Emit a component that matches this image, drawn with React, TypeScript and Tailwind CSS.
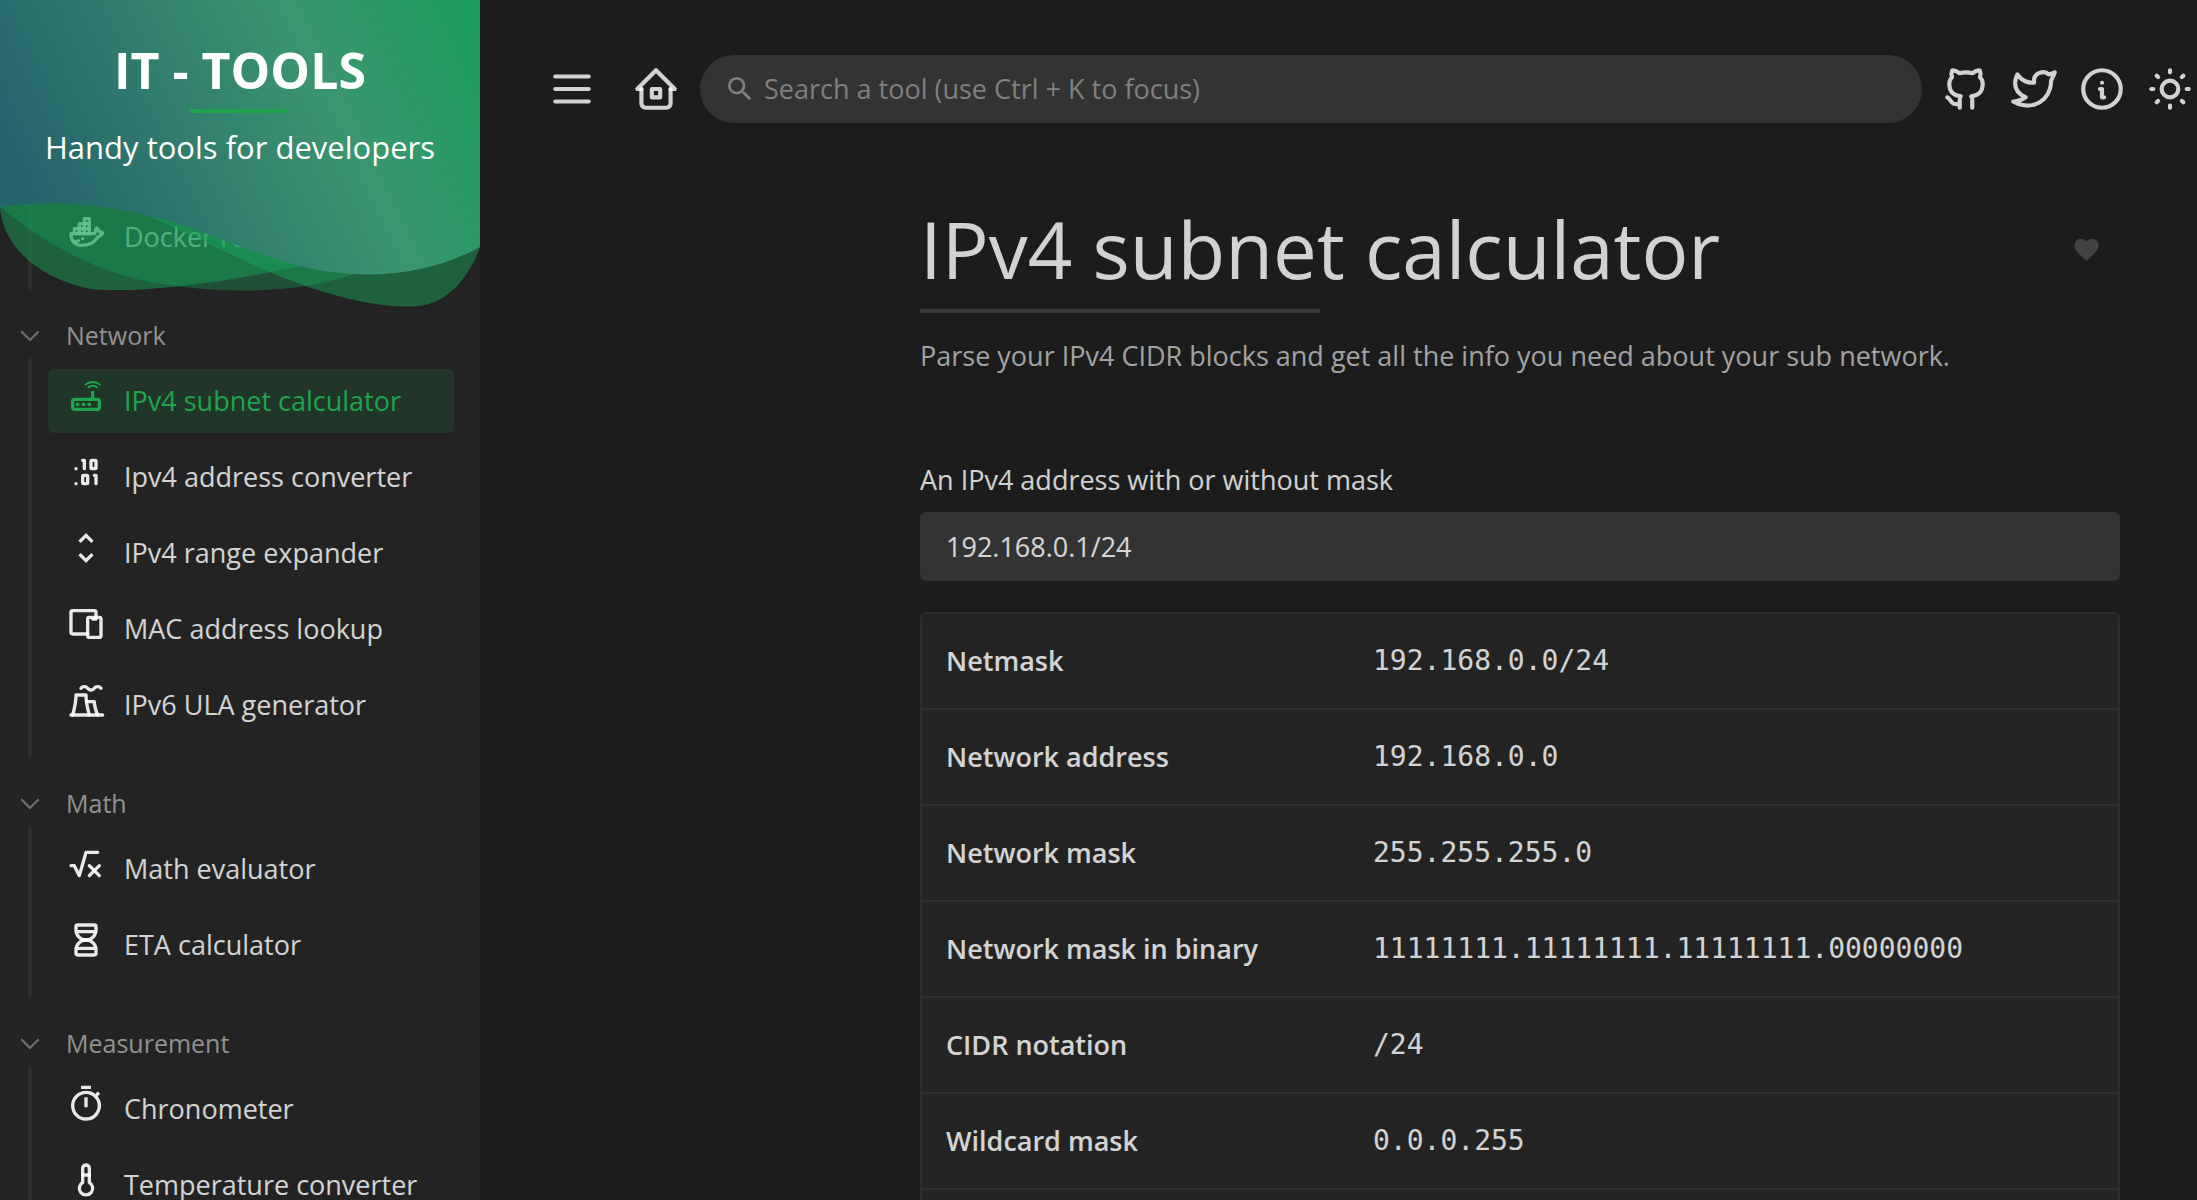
import { useState, type ReactNode } from "react";
import type { IconType } from "react-icons";
import {
  TbBinary,
  TbBrandDocker,
  TbBrandGithub,
  TbBrandTwitter,
  TbBuildingFactory,
  TbDevices,
  TbHome2,
  TbHourglass,
  TbInfoCircle,
  TbMath,
  TbMenu2,
  TbSun,
  TbTemperature,
} from "react-icons/tb";
import { MdFavorite, MdOutlineRouter, MdOutlineTimer, MdSearch, MdUnfoldMore } from "react-icons/md";

type Tool = { name: string; icon: IconType; active?: boolean };
type Category = { name?: string; tools: Tool[] };

const categories: Category[] = [
  {
    tools: [{ name: "Docker run to", icon: TbBrandDocker }],
  },
  {
    name: "Network",
    tools: [
      { name: "IPv4 subnet calculator", icon: MdOutlineRouter, active: true },
      { name: "Ipv4 address converter", icon: TbBinary },
      { name: "IPv4 range expander", icon: MdUnfoldMore },
      { name: "MAC address lookup", icon: TbDevices },
      { name: "IPv6 ULA generator", icon: TbBuildingFactory },
    ],
  },
  {
    name: "Math",
    tools: [
      { name: "Math evaluator", icon: TbMath },
      { name: "ETA calculator", icon: TbHourglass },
    ],
  },
  {
    name: "Measurement",
    tools: [
      { name: "Chronometer", icon: MdOutlineTimer },
      { name: "Temperature converter", icon: TbTemperature },
    ],
  },
];

const rows: [string, string][] = [
  ["Netmask", "192.168.0.0/24"],
  ["Network address", "192.168.0.0"],
  ["Network mask", "255.255.255.0"],
  ["Network mask in binary", "11111111.11111111.11111111.00000000"],
  ["CIDR notation", "/24"],
  ["Wildcard mask", "0.0.0.255"],
  ["Network size", "256"],
];

function Hero() {
  return (
    <a href="#home" className="absolute inset-x-0 top-0 z-10 block text-center text-white">
      <svg viewBox="0 0 480 310" className="block w-full" aria-hidden="true">
        <defs>
          <linearGradient id="hero" gradientUnits="userSpaceOnUse" x1="22" y1="170" x2="486" y2="-51">
            <stop offset="0" stopColor="#25636c" />
            <stop offset=".6" stopColor="#3b956f" />
            <stop offset="1" stopColor="#14a058" />
          </linearGradient>
        </defs>
        <path
          d="M0 207C2 240 30 276 90 289C130 293 210 286 300 266L340 180H0Z"
          fill="#18a058"
          fillOpacity=".5"
        />
        <path
          d="M0 207C50 248 110 280 177 286C240 295 310 291 360 272L380 180H0Z"
          fill="#18a058"
          fillOpacity=".36"
        />
        <path
          d="M152 218C205 240 240 262 305 286C350 301 390 309 420 306C450 302 470 275 480 247V180H152Z"
          fill="#18a058"
          fillOpacity=".5"
        />
        <path d="M0 0H480V247C420 280 350 280 292 264C250 252 210 233 165 220C115 206 60 198 0 207Z" fill="url(#hero)" />
      </svg>
      <div className="absolute inset-x-0 top-0 flex flex-col items-center pt-9">
        <div className="text-[50px] leading-[68px] font-bold">IT - TOOLS</div>
        <div className="mt-[5px] h-1 w-[100px] rounded-sm bg-[#1ea54c]" />
        <div className="mt-3 text-[31px] leading-[44px]">Handy tools for developers</div>
      </div>
    </a>
  );
}

function CategoryBlock({ category }: { category: Category }) {
  const [open, setOpen] = useState(true);
  return (
    <section>
      {category.name && (
        <button
          type="button"
          onClick={() => setOpen(!open)}
          aria-expanded={open}
          className="flex h-[66px] w-full items-start pt-6 pl-5 text-left text-[25px] leading-10 text-white/50"
        >
          <svg
            viewBox="0 0 20 40"
            className="mr-[26px] h-10 w-5"
            fill="none"
            stroke="#6b6b6b"
            strokeWidth="2.4"
            strokeLinecap="round"
            strokeLinejoin="round"
            aria-hidden="true"
          >
            <path d="M2 17L10 25L18 17" />
          </svg>
          {category.name}
        </button>
      )}
      {open && (
        <div className="flex">
          <div className="ml-7 w-1 rounded-sm bg-[#2d2d2d]" />
          <ul className="ml-4 flex min-w-0 flex-1 flex-col gap-3 pt-3 pr-[26px] pb-[22px]">
            {category.tools.map(({ name, icon: Icon, active }) => (
              <li key={name}>
                <a
                  href="#tool"
                  aria-current={active ? "page" : undefined}
                  className={`flex h-16 items-center rounded-md pl-[18px] text-[27px] ${
                    active ? "bg-[#1ea54c]/15 text-[#1ea54c]" : "text-white/80"
                  }`}
                >
                  <Icon className={`mb-[10px] size-10 shrink-0 ${active ? "" : "text-white/90"}`} />
                  <span className="ml-[18px] whitespace-nowrap">{name}</span>
                </a>
              </li>
            ))}
          </ul>
        </div>
      )}
    </section>
  );
}

function IconButton({ label, wide, children }: { label: string; wide?: boolean; children: ReactNode }) {
  return (
    <button
      type="button"
      aria-label={label}
      className={`flex h-[68px] shrink-0 items-center justify-center text-[50px] ${wide ? "w-20" : "w-[68px]"}`}
    >
      {children}
    </button>
  );
}

export default function App() {
  const [address, setAddress] = useState("192.168.0.1/24");
  return (
    <div className="flex h-screen overflow-hidden bg-[#1c1c1c] font-['Open_Sans',sans-serif] text-[27px] text-white/80">
      <aside className="relative w-[480px] shrink-0 overflow-hidden bg-[#232323]">
        <Hero />
        <nav className="pt-[193px]">
          {categories.map((category) => (
            <CategoryBlock key={category.name ?? "top"} category={category} />
          ))}
        </nav>
      </aside>

      <div className="min-w-0 flex-1 overflow-hidden">
        <header className="-mr-[7px] flex items-center gap-1 pt-[55px] pl-[52px]">
          <IconButton label="Toggle menu" wide>
            <TbMenu2 />
          </IconButton>
          <IconButton label="Home" wide>
            <TbHome2 />
          </IconButton>
          <label className="flex h-[68px] min-w-0 flex-1 items-center rounded-full bg-[#333333] pl-6">
            <MdSearch className="size-8 shrink-0 text-[#808080]" />
            <input
              type="search"
              aria-label="Search a tool"
              placeholder="Search a tool (use Ctrl + K to focus)"
              className="ml-2 min-w-0 flex-1 bg-transparent outline-none placeholder:text-[#808080]"
            />
          </label>
          <div className="ml-[6px] flex">
            <IconButton label="GitHub">
              <TbBrandGithub />
            </IconButton>
            <IconButton label="Twitter">
              <TbBrandTwitter />
            </IconButton>
            <IconButton label="About">
              <TbInfoCircle />
            </IconButton>
            <IconButton label="Light mode">
              <TbSun />
            </IconButton>
          </div>
        </header>

        <main className="mr-[77px] ml-auto w-full max-w-[1200px] pt-[70px]">
          <div className="flex items-center justify-between">
            <h1 className="text-[78px] leading-[112px]">IPv4 subnet calculator</h1>
            <button type="button" aria-label="Add to favorites" className="flex size-[68px] items-center justify-center text-[#424242]">
              <MdFavorite className="size-[29px]" />
            </button>
          </div>
          <div className="mt-1 h-1 w-[400px] bg-[#383838]" />
          <p className="mt-[23px] leading-10 text-white/60">
            Parse your IPv4 CIDR blocks and get all the info you need about your sub network.
          </p>

          <label htmlFor="address" className="mt-[84px] block leading-10">
            An IPv4 address with or without mask
          </label>
          <input
            id="address"
            value={address}
            onChange={(event) => setAddress(event.target.value)}
            className="mt-3 block h-[69px] w-full rounded-md bg-[#333333] px-[26px] outline-none"
          />

          <div className="mt-[31px] overflow-hidden rounded-md border-2 border-[#2d2d2d] bg-[#232323]">
            <table className="w-full table-fixed border-separate border-spacing-0">
              <tbody>
                {rows.map(([label, value]) => (
                  <tr key={label} className="h-24">
                    <th scope="row" className="w-[427px] border-b-2 border-[#2d2d2d] pl-6 text-left font-semibold">
                      {label}
                    </th>
                    <td className="border-b-2 border-[#2d2d2d] pl-6 font-['DejaVu_Sans_Mono',monospace] text-[28px]">
                      {value}
                    </td>
                  </tr>
                ))}
              </tbody>
            </table>
          </div>
        </main>
      </div>
    </div>
  );
}
